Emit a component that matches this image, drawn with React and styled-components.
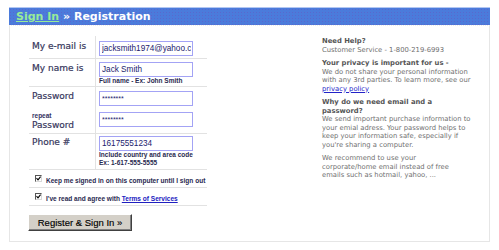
import styled, { createGlobalStyle } from "styled-components";

const GlobalStyle = createGlobalStyle`
  body {
    margin: 0;
    background: #ffffff;
    font-family: "DejaVu Sans", Verdana, sans-serif;
  }
`;

const Page = styled.div`
  padding: 7px 0 0 9px;
  width: 481px;
`;

const TitleBar = styled.div`
  height: 17px;
  border-top: 1px solid #b3c6f2;
  background-color: #4b7bdb;
  background-image: radial-gradient(rgba(110, 80, 190, 0.45) 0.7px, transparent 0.9px);
  background-size: 3px 3px;
  display: flex;
  align-items: center;
  padding-left: 7px;
  font: bold 11px "DejaVu Sans", Verdana, sans-serif;
  color: #ffffff;
  white-space: pre;
`;

const Crumb = styled.a`
  color: #98ec98;
  text-decoration: underline;
`;

const Panel = styled.div`
  height: 205px;
  border: 1px solid #e6e6e6;
  border-top: 1px dotted #ececec;
  display: flex;
  padding: 10px 0 0 19px;
`;

const Form = styled.div`
  width: 178px;
  display: flex;
  flex-direction: column;
`;

const Row = styled.div`
  display: grid;
  grid-template-columns: 67px 1fr;
  border-bottom: ${(p) => (p.$open ? "none" : "1px solid #e2e2e2")};
`;

const Label = styled.div`
  border-right: 1px solid #e2e2e2;
  padding: ${(p) => p.$top ?? 5}px 0 0 3px;
  font-size: 9px;
  line-height: 10px;
  color: #36365c;
  -webkit-text-stroke: 0.2px #36365c;
`;

const SmallLabel = styled.div`
  font: bold 6.5px/8px "Liberation Sans", Arial, sans-serif;
  color: #33335f;
  -webkit-text-stroke: 0;
`;

const Field = styled.div`
  padding: ${(p) => p.$top}px 0 ${(p) => p.$bottom}px 3px;
`;

const Input = styled.input`
  box-sizing: border-box;
  display: block;
  width: 94px;
  height: 15px;
  margin: 0;
  padding: 0 1px 0 2px;
  border: 1px solid #a3a3f5;
  background: #ffffff;
  font: ${(p) => (p.$masked ? "7px" : "8.2px")} "Liberation Sans", Arial, sans-serif;
  color: #22226e;
  outline: none;
`;

const Hint = styled.div`
  font: bold 6.5px/${(p) => p.$lh ?? 8}px "Liberation Sans", Arial, sans-serif;
  color: #29294f;
  white-space: nowrap;
`;

const CheckRow = styled.div`
  height: 17px;
  display: flex;
  align-items: center;
  gap: 4px;
  padding-left: 6px;
  border-bottom: 1px solid #e2e2e2;
`;

const Box = styled.span`
  box-sizing: border-box;
  width: 7px;
  height: 7px;
  border: 1px solid;
  border-color: #555 #d8d8d8 #d8d8d8 #555;
  background: #fff;
  display: flex;
  align-items: center;
  justify-content: center;
`;

const CheckText = styled.span`
  padding-top: 3px;
  font: bold 6.55px "Liberation Sans", Arial, sans-serif;
  color: #29294f;
  white-space: nowrap;
`;

const Link = styled.a`
  color: ${(p) => p.$color ?? "#2323c8"};
  text-decoration: underline;
`;

const Button = styled.button`
  align-self: flex-start;
  margin: 8px 0 0 -1px;
  width: 104px;
  height: 17px;
  padding: 0;
  background: #d4d0c8;
  border: 1px solid;
  border-color: #ffffff #404040 #404040 #ffffff;
  box-shadow: inset -1px -1px 0 #808080;
  font: 9.5px "Liberation Sans", Arial, sans-serif;
  color: #000;
  -webkit-text-stroke: 0.15px #000;
`;

const Aside = styled.div`
  width: 152px;
  margin-left: 115px;
  padding-top: 1px;
  font-size: 6.8px;
  line-height: 8.5px;
  color: #707070;
`;

const Para = styled.p`
  margin: 0 0 5px;
  width: ${(p) => p.$width ?? "auto"};
`;

const Strong = styled.b`
  display: block;
  color: #555555;
`;

const Check = () => (
  <Box>
    <svg width="5" height="5" viewBox="0 0 5 5">
      <path d="M0.5 2.2 L2 3.8 L4.6 0.6" fill="none" stroke="#000" strokeWidth="1.1" />
    </svg>
  </Box>
);

export default function App() {
  return (
    <Page>
      <GlobalStyle />
      <TitleBar>
        <Crumb>Sign In</Crumb> » Registration
      </TitleBar>
      <Panel>
        <Form>
          <Row>
            <Label>My e-mail is</Label>
            <Field $top={5} $bottom={2}>
              <Input defaultValue="jacksmith1974@yahoo.com" />
            </Field>
          </Row>
          <Row>
            <Label $top={4}>My name is</Label>
            <Field $top={3} $bottom={1}>
              <Input defaultValue="Jack Smith" />
              <Hint>Full name - Ex: John Smith</Hint>
            </Field>
          </Row>
          <Row $open>
            <Label $top={4}>Password</Label>
            <Field $top={4} $bottom={2}>
              <Input $masked defaultValue="********" />
            </Field>
          </Row>
          <Row>
            <Label $top={4}>
              <SmallLabel>repeat</SmallLabel>
              Password
            </Label>
            <Field $top={4} $bottom={6}>
              <Input $masked defaultValue="********" />
            </Field>
          </Row>
          <Row>
            <Label $top={3}>Phone #</Label>
            <Field $top={2} $bottom={3}>
              <Input defaultValue="16175551234" />
              <Hint $lh={7.5}>Include country and area code</Hint>
              <Hint $lh={7.5}>Ex: 1-617-555-5555</Hint>
            </Field>
          </Row>
          <CheckRow>
            <Check />
            <CheckText>Keep me signed in on this computer until I sign out</CheckText>
          </CheckRow>
          <CheckRow>
            <Check />
            <CheckText>
              I've read and agree with <Link $color="#2020c0">Terms of Services</Link>
            </CheckText>
          </CheckRow>
          <Button>Register &amp; Sign In »</Button>
        </Form>
        <Aside>
          <Para>
            <Strong>Need Help?</Strong>
            Customer Service - 1-800-219-6993
          </Para>
          <Para>
            <Strong>Your privacy is important for us -</Strong>
            We do not share your personal information with any 3rd parties. To learn more, see our{" "}
            <Link>privacy policy</Link>
          </Para>
          <Para>
            <Strong>Why do we need email and a password?</Strong>
            We send important purchase information to your emial adress. Your password helps to keep
            your information safe, especially if you're sharing a computer.
          </Para>
          <Para $width="136px">
            We recommend to use your corporate/home email instead of free emails such as hotmail,
            yahoo, ...
          </Para>
        </Aside>
      </Panel>
    </Page>
  );
}
